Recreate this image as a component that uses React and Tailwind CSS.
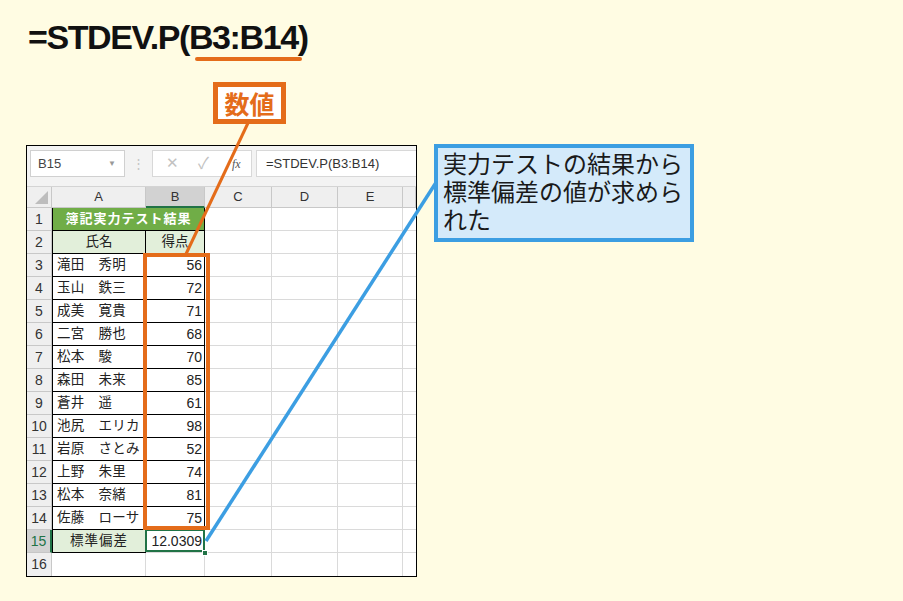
const scores = [
  ['滝田　秀明', 56],
  ['玉山　鉄三', 72],
  ['成美　寛貴', 71],
  ['二宮　勝也', 68],
  ['松本　駿', 70],
  ['森田　未来', 85],
  ['蒼井　遥', 61],
  ['池尻　エリカ', 98],
  ['岩原　さとみ', 52],
  ['上野　朱里', 74],
  ['松本　奈緒', 81],
  ['佐藤　ローサ', 75],
];

const font = "font-['Liberation_Sans','Noto_Sans_CJK_JP',sans-serif]";

function RowHead({ n, selected }) {
  return (
    <div
      className={
        selected
          ? 'flex items-center justify-center border-b border-r-2 border-b-[#c6c6c6] border-r-[#217346] bg-[#d2d2d2] text-[14px] text-[#217346]'
          : 'flex items-center justify-center border-b border-r border-[#c8c8c8] bg-[#efefef] text-[14px] text-[#333]'
      }
    >
      {n}
    </div>
  );
}

function Blank({ last }) {
  return <div className={last ? 'border-b border-[#dadada] bg-white' : 'border-b border-r border-[#dadada] bg-white'} />;
}

function BlankCols() {
  return (
    <>
      <Blank />
      <Blank />
      <Blank />
      <Blank last />
    </>
  );
}

function Sheet() {
  return (
    <div className={`ml-[26px] mt-[91px] w-[391px] border border-black bg-white ${font}`}>
      {/* formula bar */}
      <div className="flex h-[41px] items-start border-b border-[#d4d4d4] bg-[#f3f3f3] pt-[4px]">
        <div className="ml-[3px] flex h-[27px] w-[95px] items-center justify-between border border-[#d0d0d0] bg-white pl-[7px] pr-[8px] text-[13px] text-[#444]">
          <span>B15</span>
          <span className="text-[8px] text-[#999]">▼</span>
        </div>
        <div className="flex h-[27px] w-[27px] items-center justify-center text-[13px] text-[#c4c4c4]">⋮</div>
        <div className="flex h-[27px] w-[100px] items-center border border-[#d8d8d8] bg-white text-[#c2c2c2]">
          <span className="ml-[13px] text-[15px]">✕</span>
          <span className="ml-[19px] text-[16px]">✓</span>
          <span className="ml-[23px] font-['Liberation_Serif',serif] text-[12px] italic text-[#555]">fx</span>
        </div>
        <div className="ml-[4px] flex h-[27px] flex-1 items-center border border-r-0 border-[#d8d8d8] bg-white pl-[9px] text-[13px] text-[#333]">
          =STDEV.P(B3:B14)
        </div>
      </div>

      <div className="grid grid-cols-[25px_94px_59px_67px_66px_65px_13px] grid-rows-[21px_repeat(16,23px)]">
        {/* column headers */}
        <div className="relative border-b border-r border-[#c8c8c8] bg-[#efefef]">
          <div className="absolute bottom-[3px] right-[3px] h-0 w-0 border-b-[13px] border-l-[13px] border-b-[#bdbdbd] border-l-transparent" />
        </div>
        {['A', 'B', 'C', 'D', 'E', ''].map((c) => (
          <div
            key={c || 'F'}
            className={
              c === 'B'
                ? 'flex items-center justify-center border-b-2 border-r border-b-[#217346] border-r-[#c8c8c8] bg-[#d2d2d2] text-[13px] text-[#333]'
                : 'flex items-center justify-center border-b border-r border-[#c8c8c8] bg-[#efefef] text-[13px] text-[#333]'
            }
          >
            {c}
          </div>
        ))}

        {/* row 1: merged title */}
        <RowHead n={1} />
        <div className="col-span-2 flex items-center justify-center border-b border-l border-r border-black bg-[#70ad47] text-[13px] font-bold tracking-[1px] text-white">
          簿記実力テスト結果
        </div>
        <BlankCols />

        {/* row 2 */}
        <RowHead n={2} />
        <div className="flex items-center justify-center border-b border-l border-r border-black bg-[#e2efda] text-[13.5px] text-[#222]">氏名</div>
        <div className="flex items-center justify-center border-b border-r border-black bg-[#e2efda] text-[13.5px] text-[#222]">得点</div>
        <BlankCols />

        {scores.map(([name, score], i) => (
          <div key={name} className="contents">
            <RowHead n={i + 3} />
            <div className="flex items-center whitespace-pre border-b border-l border-r border-black pl-[4px] text-[13.5px] tracking-[0.3px] text-[#222]">
              {name}
            </div>
            <div className="flex items-center justify-end border-b border-r border-black pr-[2px] text-[14px] text-[#222]">
              {score}
            </div>
            <BlankCols />
          </div>
        ))}

        {/* row 15 */}
        <RowHead n={15} selected />
        <div className="flex items-center justify-center border-b border-l border-r border-black bg-[#e2efda] text-[13.5px] tracking-[1px] text-[#222]">標準偏差</div>
        <div className="relative flex items-center justify-end border-b border-r border-[#dadada] pr-[2px] text-[14px] text-[#222]">
          12.0309
          <div className="absolute -left-[1px] -top-[1px] bottom-0 right-[-1px] border-2 border-[#217346]" />
          <div className="absolute -bottom-[4px] -right-[4px] h-[6px] w-[6px] border border-white bg-[#217346]" />
        </div>
        <BlankCols />

        {/* row 16 */}
        <div className="flex items-center justify-center border-r border-[#c8c8c8] bg-[#efefef] text-[14px] text-[#333]">16</div>
        <div className="border-r border-[#dadada]" />
        <div className="border-r border-[#dadada]" />
        <div className="border-r border-[#dadada]" />
        <div className="border-r border-[#dadada]" />
        <div className="border-r border-[#dadada]" />
        <div />
      </div>
    </div>
  );
}

export default function App() {
  return (
    <div className="relative h-[601px] w-[903px] overflow-hidden bg-[#fffce3]">
      <h1 className="pl-[28px] pt-[20px] font-['Liberation_Sans',sans-serif] text-[34px] font-bold leading-[34px] tracking-[-1.4px] text-[#111]">
        =STDEV.P(B3:B14)
      </h1>

      <Sheet />

      {/* underline for the argument */}
      <div className="absolute left-[195px] top-[57px] h-[4px] w-[107px] rounded-full bg-[#e46c1a]" />

      {/* range highlight B3:B14 */}
      <div className="absolute left-[143px] top-[253px] h-[277px] w-[67px] border-4 border-[#e46c1a]" />

      {/* leader lines */}
      <svg className="pointer-events-none absolute left-0 top-0" width="903" height="601">
        <line x1="248" y1="123" x2="186" y2="254" stroke="#e46c1a" strokeWidth="3" />
        <line x1="206" y1="541" x2="437" y2="181" stroke="#3c9ee2" strokeWidth="3.5" />
      </svg>

      {/* 数値 label */}
      <div className="absolute left-[213px] top-[82px] flex h-[42px] w-[73px] items-center justify-center border-[5px] border-[#e46c1a] bg-white font-['Noto_Sans_CJK_JP',sans-serif] text-[25px] font-bold leading-none text-[#e46c1a]">
        数値
      </div>

      {/* result note */}
      <div className="absolute left-[434px] top-[144px] h-[98px] w-[260px] border-4 border-[#3c9ee2] bg-[#d4eafa] pl-[5px] pt-[1px] font-['Noto_Sans_CJK_JP',sans-serif] text-[24px] leading-[28px] text-[#1a1a1a]">
        実力テストの結果から標準偏差の値が求められた
      </div>
    </div>
  );
}
